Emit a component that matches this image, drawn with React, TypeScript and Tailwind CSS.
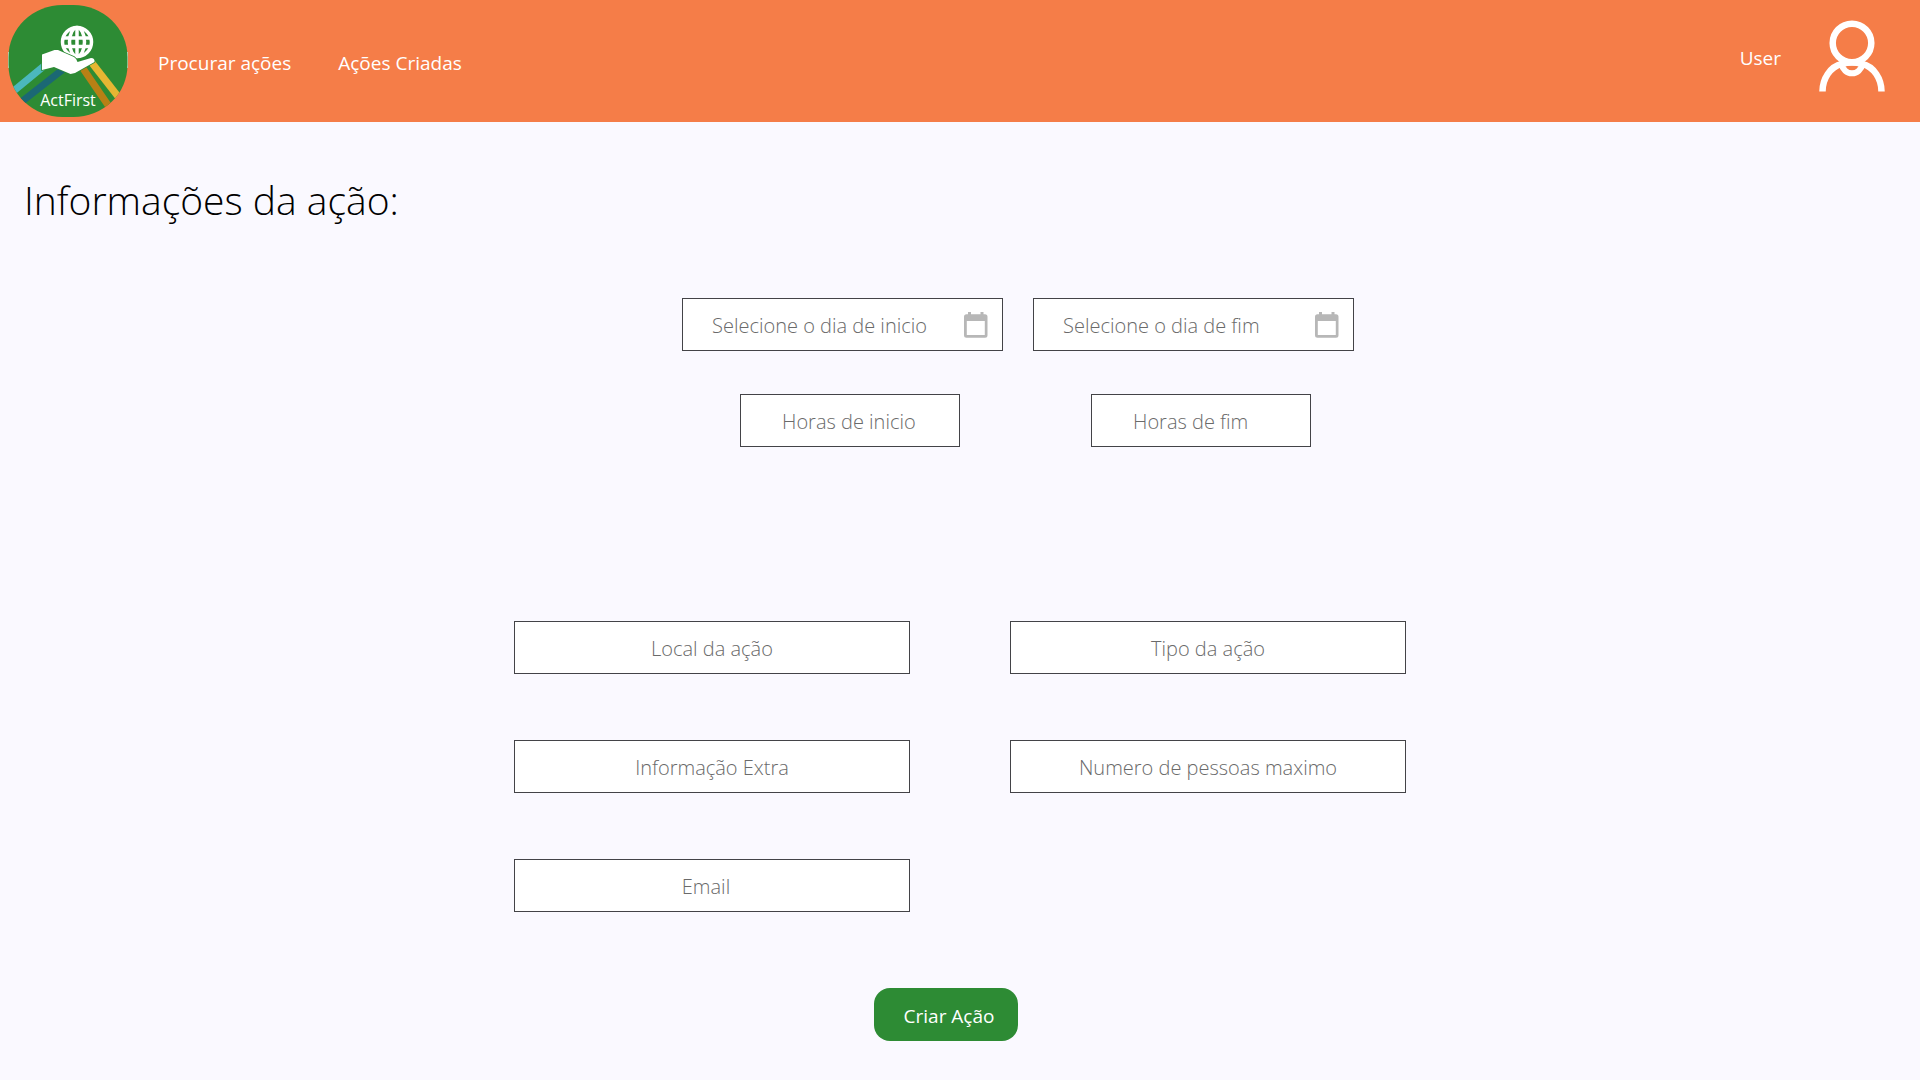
import React from "react";

type FieldProps = {
  label: string;
  type?: string;
  className: string;
};

function Field({ label, type = "text", className }: FieldProps) {
  return (
    <input
      type={type}
      aria-label={label}
      placeholder={label}
      className={`h-[53px] max-w-full min-w-0 border border-[#434347] bg-white pt-0.5 text-[20px] font-light text-[#333] placeholder:text-[#6a6a6a] ${className}`}
    />
  );
}

function DateField({ label }: { label: string }) {
  return (
    <div className="relative">
      <Field label={label} className="w-[321px] pr-14 pl-[29px]" />
      <button
        type="button"
        aria-label={`Abrir calendário: ${label}`}
        className="absolute top-[14px] right-[15px] h-[26px] w-6"
      >
        <svg viewBox="0 0 24 26" className="h-full w-full" fill="#b7b7b7">
          <path
            fillRule="evenodd"
            d="M4 0h3v2.300h9.500V0h3v2.300h1.500a2.500 2.500 0 0 1 2.500 2.500v18.500a2.500 2.500 0 0 1-2.500 2.500h-18.500A2.500 2.500 0 0 1 0 23.300v-18.500A2.500 2.500 0 0 1 2.500 2.300H4zM2.800 9v14h18V9z"
          />
        </svg>
      </button>
    </div>
  );
}

function Logo() {
  return (
    <svg viewBox="0 0 120 112" className="h-28 w-[120px] shrink-0" role="img" aria-label="ActFirst">
      <defs>
        <clipPath id="badge">
          <rect x="0.500" width="119" height="112" rx="54" ry="52" />
        </clipPath>
      </defs>
      <path d="M.5 47v16M119.500 47v16" stroke="#e9efdf" strokeWidth="1" />
      <g clipPath="url(#badge)">
        <rect width="120" height="112" fill="#2d8b34" />
        <path d="M36 61 2 89" stroke="#4bb8bd" strokeWidth="7" />
        <path d="M58 62 12 98" stroke="#1b6874" strokeWidth="7" />
        <path d="M74 62 102 103" stroke="#b88015" strokeWidth="7" />
        <path d="M84 58 112 94" stroke="#e6b633" strokeWidth="7" />
      </g>
      <g fill="none" stroke="#fff" strokeWidth="3.500">
        <circle cx="69" cy="37" r="14.500" />
        <ellipse cx="69" cy="37" rx="7.500" ry="14.500" />
        <path d="M69 22v30M55.500 33h27M55.500 41.500h27" />
      </g>
      <path
        d="M34 49.500 46.500 45 50 45 66 52Q68.500 53.500 69.500 57L83 53Q87 53 86.500 57L67 68 62.500 69 46 62 34 65Z"
        fill="#fff"
        stroke="#2d8b34"
        strokeWidth="1.500"
        paintOrder="stroke"
      />
      <text x="60" y="101" textAnchor="middle" fontSize="16" fontWeight="500" fill="#fff" fontFamily="'Open Sans', sans-serif">
        ActFirst
      </text>
    </svg>
  );
}

function UserIcon() {
  return (
    <svg viewBox="0 0 66 72" className="h-[72px] w-[66px]" fill="none" stroke="#fff" strokeWidth="6.500" aria-hidden="true">
      <circle cx="33" cy="23" r="19.300" />
      <path d="M3.500 71.500C3.500 59 11 46.500 23 44Q33 41 43 44C55 46.500 62.500 59 62.500 71.500" />
      <path d="M22.500 44a10.700 11.500 0 0 0 21 0" strokeWidth="6" />
    </svg>
  );
}

export default function App() {
  return (
    <div className="min-h-screen bg-[#faf9ff] font-['Open_Sans',sans-serif] text-black">
      <header className="flex h-[122px] items-center justify-between bg-[#f57d48] pr-[35px] pl-2 text-[19px] text-white">
        <div className="flex items-center">
          <a href="#inicio">
            <Logo />
          </a>
          <nav className="ml-[30px] flex gap-[47px] pt-1">
            <a href="#procurar">Procurar ações</a>
            <a href="#criadas">Ações Criadas</a>
          </nav>
        </div>
        <a href="#perfil" className="flex items-center gap-[38px] pb-2.5">
          <span className="pt-1">User</span>
          <UserIcon />
        </a>
      </header>

      <main>
        <h1 className="px-6 pt-[50px] text-[39px] leading-[56px] font-light">Informações da ação:</h1>

        <form onSubmit={(event) => event.preventDefault()}>
          <div className="mt-[70px] flex flex-wrap justify-center gap-[30px] pl-[116px]">
            <DateField label="Selecione o dia de inicio" />
            <DateField label="Selecione o dia de fim" />
          </div>
          <div className="mt-[43px] flex flex-wrap justify-center gap-[131px] pl-[131px]">
            <Field label="Horas de inicio" className="w-[220px] pl-[41px]" />
            <Field label="Horas de fim" className="w-[220px] pl-[41px]" />
          </div>

          <div className="mx-auto mt-[174px] grid max-w-[892px] grid-cols-2 gap-x-[100px] gap-y-[66px]">
            <Field label="Local da ação" className="w-full text-center" />
            <Field label="Tipo da ação" className="w-full text-center" />
            <Field label="Informação Extra" className="w-full text-center" />
            <Field label="Numero de pessoas maximo" className="w-full text-center" />
            <Field label="Email" type="email" className="w-full pr-3 text-center" />
          </div>

          <div className="mt-[76px] flex justify-center pr-7 pb-9">
            <button type="submit" className="h-[53px] w-36 rounded-2xl bg-[#2d8b34] pt-1 pl-1.5 text-[19px] text-white">
              Criar Ação
            </button>
          </div>
        </form>
      </main>
    </div>
  );
}
